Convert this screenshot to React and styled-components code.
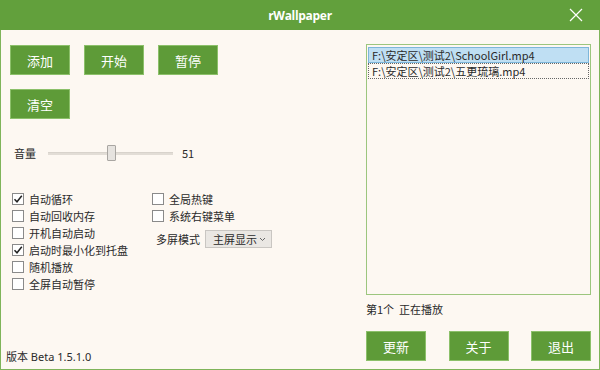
import React from "react";
import styled, { createGlobalStyle } from "styled-components";

const GlobalStyle = createGlobalStyle`
  html, body {
    margin: 0;
    padding: 0;
    background: #fdf8f2;
  }
  * {
    box-sizing: border-box;
  }
`;

const Window = styled.div`
  width: 600px;
  height: 370px;
  display: flex;
  flex-direction: column;
  background: #fdf8f2;
  font-family: "Microsoft YaHei", "Noto Sans CJK SC", "Noto Sans", sans-serif;
  font-size: 11px;
  color: #2a2a2a;
  overflow: hidden;
`;

const TitleBar = styled.div`
  height: 30px;
  flex-shrink: 0;
  background: #62a03c;
  display: flex;
  align-items: center;
  justify-content: center;
  position: relative;
  color: #fff;
  font-family: "Open Sans", "Noto Sans", sans-serif;
  font-weight: 700;
  font-size: 12px;
  letter-spacing: -0.3px;
`;

const CloseButton = styled.div`
  position: absolute;
  right: 17px;
  top: 8px;
  width: 14px;
  height: 14px;
  display: flex;
`;

const Body = styled.div`
  flex: 1;
  display: flex;
  border: 1px solid #7fb45a;
  border-top: none;
`;

const LeftPanel = styled.div`
  width: 364px;
  display: flex;
  flex-direction: column;
  padding: 15px 0 5px 9px;
`;

const ButtonRow = styled.div`
  display: flex;
  gap: 14px;
  margin-bottom: ${(p) => p.$mb || 0}px;
`;

const GreenButton = styled.div`
  width: ${(p) => p.$w || 60}px;
  height: 30px;
  background: #5e9b38;
  border: 1px solid #8cc06a;
  color: #fff;
  font-size: 13px;
  display: flex;
  align-items: center;
  justify-content: center;
`;

const VolumeRow = styled.div`
  display: flex;
  align-items: center;
  height: 18px;
  margin-top: 25px;
  padding-left: 4px;
`;

const VolumeLabel = styled.span`
  width: 34px;
`;

const Slider = styled.div`
  width: 125px;
  height: 16px;
  display: flex;
  align-items: center;
  position: relative;
`;

const Track = styled.div`
  width: 100%;
  height: 3px;
  background: #e2ddd6;
  border-top: 1px solid #d8d3cc;
`;

const Thumb = styled.div`
  position: absolute;
  top: 0;
  width: 9px;
  height: 16px;
  background: #e6e3df;
  border: 1px solid #a9a6a2;
  border-radius: 1px;
`;

const VolumeValue = styled.span`
  margin-left: 9px;
`;

const Options = styled.div`
  display: flex;
  margin-top: 28px;
  padding-left: 2px;
`;

const OptionColumn = styled.div`
  display: flex;
  flex-direction: column;
  width: ${(p) => p.$w}px;
`;

const CheckRow = styled.div`
  display: flex;
  align-items: center;
  height: 17px;
  gap: 5px;
`;

const Box = styled.div`
  width: 12px;
  height: 12px;
  border: 1px solid #8a8a8a;
  background: #fff;
  display: flex;
  align-items: center;
  justify-content: center;
`;

const ScreenRow = styled.div`
  display: flex;
  align-items: center;
  margin-top: 6px;
  padding-left: 4px;
  gap: 5px;
`;

const Combo = styled.div`
  width: 67px;
  height: 18px;
  flex-shrink: 0;
  background: #eae7e3;
  border: 1px solid #c9c6c2;
  display: flex;
  align-items: center;
  justify-content: space-between;
  padding: 0 5px 0 7px;
  white-space: nowrap;
`;

const Version = styled.div`
  margin-top: auto;
  margin-left: -4px;
  font-family: "Noto Sans", "Noto Sans CJK SC", sans-serif;
`;

const RightPanel = styled.div`
  flex: 1;
  display: flex;
  flex-direction: column;
  padding: 14px 8px 8px 1px;
`;

const ListBox = styled.div`
  height: 251px;
  border: 1px solid #9cc67e;
  background: #fdf8f2;
  padding: 2px 1px;
  display: flex;
  flex-direction: column;
`;

const ListItem = styled.div`
  height: 16px;
  line-height: 14px;
  padding-left: 3px;
  white-space: nowrap;
  background: ${(p) => (p.$selected ? "#bfdff3" : "transparent")};
  border: 1px ${(p) => (p.$selected ? "solid #7db6da" : "dotted #666")};
`;

const Status = styled.div`
  margin-top: 6px;
  height: 16px;
  line-height: 16px;
`;

const BottomButtons = styled.div`
  margin-top: auto;
  display: flex;
  justify-content: space-between;
`;

const Check = () => (
  <svg width="10" height="10" viewBox="0 0 10 10">
    <path d="M1.5 5.2 L4 7.8 L8.8 1.8" fill="none" stroke="#222" strokeWidth="1.5" />
  </svg>
);

const CheckItem = ({ checked, children }) => (
  <CheckRow>
    <Box>{checked && <Check />}</Box>
    <span>{children}</span>
  </CheckRow>
);

function App() {
  return (
    <>
      <GlobalStyle />
      <Window>
        <TitleBar>
          rWallpaper
          <CloseButton>
            <svg width="14" height="14" viewBox="0 0 14 14">
              <path d="M1 1 L13 13 M13 1 L1 13" stroke="#fff" strokeWidth="1.2" />
            </svg>
          </CloseButton>
        </TitleBar>
        <Body>
          <LeftPanel>
            <ButtonRow $mb={14}>
              <GreenButton>添加</GreenButton>
              <GreenButton>开始</GreenButton>
              <GreenButton>暂停</GreenButton>
            </ButtonRow>
            <ButtonRow>
              <GreenButton>清空</GreenButton>
            </ButtonRow>
            <VolumeRow>
              <VolumeLabel>音量</VolumeLabel>
              <Slider>
                <Track />
                <Thumb style={{ left: `${Math.round((51 / 100) * 125) - 5}px` }} />
              </Slider>
              <VolumeValue>51</VolumeValue>
            </VolumeRow>
            <Options>
              <OptionColumn $w={140}>
                <CheckItem checked>自动循环</CheckItem>
                <CheckItem>自动回收内存</CheckItem>
                <CheckItem>开机自动启动</CheckItem>
                <CheckItem checked>启动时最小化到托盘</CheckItem>
                <CheckItem>随机播放</CheckItem>
                <CheckItem>全屏自动暂停</CheckItem>
              </OptionColumn>
              <OptionColumn $w={150}>
                <CheckItem>全局热键</CheckItem>
                <CheckItem>系统右键菜单</CheckItem>
                <ScreenRow>
                  <span>多屏模式</span>
                  <Combo>
                    <span>主屏显示</span>
                    <svg width="7" height="5" viewBox="0 0 7 5">
                      <path d="M1 1 L3.5 3.5 L6 1" fill="none" stroke="#666" strokeWidth="1" />
                    </svg>
                  </Combo>
                </ScreenRow>
              </OptionColumn>
            </Options>
            <Version>版本 Beta 1.5.1.0</Version>
          </LeftPanel>
          <RightPanel>
            <ListBox>
              <ListItem $selected>F:\安定区\测试2\SchoolGirl.mp4</ListItem>
              <ListItem>F:\安定区\测试2\五更琉璃.mp4</ListItem>
            </ListBox>
            <Status>第1个&nbsp;&nbsp;正在播放</Status>
            <BottomButtons>
              <GreenButton>更新</GreenButton>
              <GreenButton>关于</GreenButton>
              <GreenButton>退出</GreenButton>
            </BottomButtons>
          </RightPanel>
        </Body>
      </Window>
    </>
  );
}

export default App;
